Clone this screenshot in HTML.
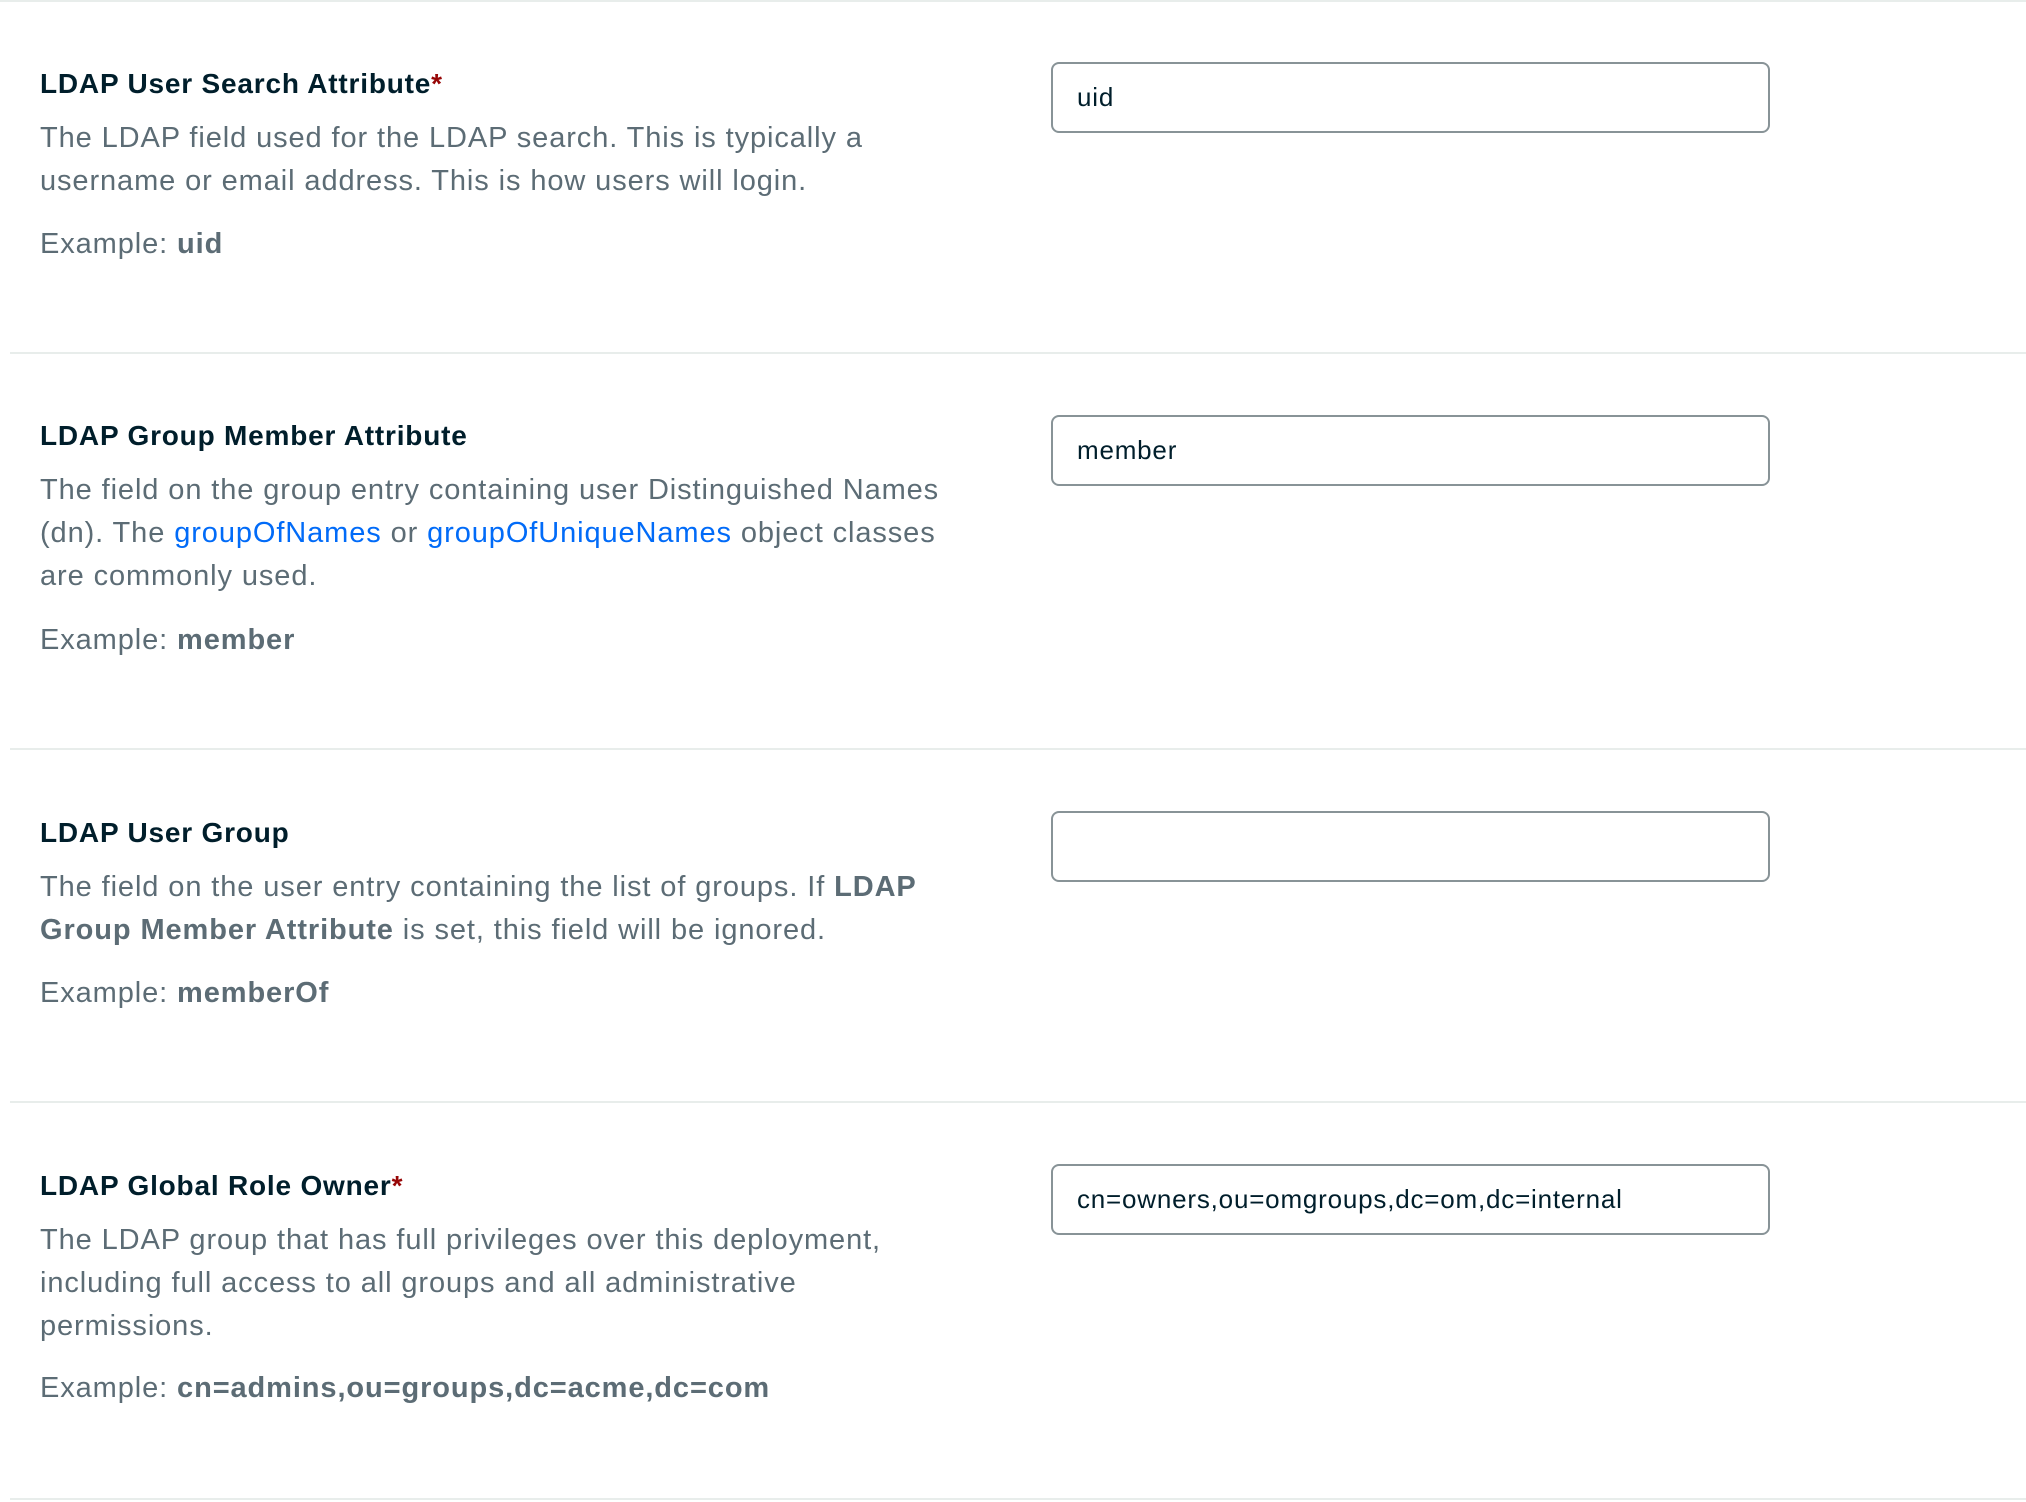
<!DOCTYPE html>
<html><head><meta charset="utf-8"><style>
html,body{margin:0;padding:0;background:#fff;width:2026px;height:1502px;overflow:hidden;position:relative;font-family:"Liberation Sans",sans-serif}
.hr{position:absolute;left:10px;right:0;height:2px;background:#e8edeb}
.h{position:absolute;left:40px;font-size:28px;font-weight:bold;color:#001e2b;line-height:34px;letter-spacing:0.8px}
.h span{color:#970606}
.d{position:absolute;left:40px;font-size:29px;color:#5c6c75;line-height:43px;white-space:nowrap;letter-spacing:0.9px}
.d b{color:#5c6c75}
.d a{color:#016bf8;text-decoration:none}
.in{position:absolute;left:1051px;width:719px;height:71px;border:2px solid #889397;border-radius:8px;box-sizing:border-box;font-size:26px;color:#001e2b;line-height:67px;padding-left:24px;letter-spacing:0.8px}
</style></head><body>
<div class="hr" style="top:0;left:0"></div>

<div class="h" style="top:67px">LDAP User Search Attribute<span>*</span></div>
<div class="d" style="top:117px">The LDAP field used for the LDAP search. This is typically a<br>username or email address. This is how users will login.</div>
<div class="d" style="top:223px">Example: <b>uid</b></div>
<div class="in" style="top:62px">uid</div>
<div class="hr" style="top:352px"></div>

<div class="h" style="top:419px">LDAP Group Member Attribute</div>
<div class="d" style="top:469px">The field on the group entry containing user Distinguished Names<br>(dn). The <a>groupOfNames</a> or <a>groupOfUniqueNames</a> object classes<br>are commonly used.</div>
<div class="d" style="top:619px">Example: <b>member</b></div>
<div class="in" style="top:415px">member</div>
<div class="hr" style="top:748px"></div>

<div class="h" style="top:816px">LDAP User Group</div>
<div class="d" style="top:866px">The field on the user entry containing the list of groups. If <b>LDAP</b><br><b>Group Member Attribute</b> is set, this field will be ignored.</div>
<div class="d" style="top:972px">Example: <b>memberOf</b></div>
<div class="in" style="top:811px"></div>
<div class="hr" style="top:1101px"></div>

<div class="h" style="top:1169px">LDAP Global Role Owner<span>*</span></div>
<div class="d" style="top:1219px">The LDAP group that has full privileges over this deployment,<br>including full access to all groups and all administrative<br>permissions.</div>
<div class="d" style="top:1367px">Example: <b>cn=admins,ou=groups,dc=acme,dc=com</b></div>
<div class="in" style="top:1164px">cn=owners,ou=omgroups,dc=om,dc=internal</div>
<div class="hr" style="top:1498px"></div>
</body></html>
